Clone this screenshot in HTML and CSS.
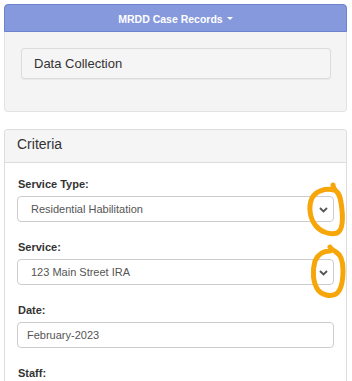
FILE: index.html
```html
<!DOCTYPE html>
<html>
<head>
<meta charset="utf-8">
<link rel="stylesheet" href="styles.css">
</head>
<body>
<div class="page">
  <div class="menu-btn">MRDD Case Records<span class="caret"></span></div>
  <div class="menu-panel">
    <div class="well">Data Collection</div>
  </div>

  <div class="panel">
    <div class="panel-heading">Criteria</div>
    <div class="panel-body">
      <div class="form-group">
        <div class="label">Service Type:</div>
        <div class="select">
          <span>Residential Habilitation</span>
          <svg class="chev" width="9" height="6" viewBox="0 0 9 6"><path d="M1 1 L4.5 4.5 L8 1" fill="none" stroke="#555" stroke-width="1.8"/></svg>
        </div>
      </div>
      <div class="form-group">
        <div class="label">Service:</div>
        <div class="select">
          <span>123 Main Street IRA</span>
          <svg class="chev" width="9" height="6" viewBox="0 0 9 6"><path d="M1 1 L4.5 4.5 L8 1" fill="none" stroke="#555" stroke-width="1.8"/></svg>
        </div>
      </div>
      <div class="form-group">
        <div class="label">Date:</div>
        <div class="input">February-2023</div>
      </div>
      <div class="form-group last">
        <div class="label">Staff:</div>
      </div>
    </div>
  </div>
</div>
<svg class="marks" width="352" height="381" viewBox="0 0 352 381">
  <path d="M334,190 C325,188 316,191 312,198 C308,207 310,219 316,226 C321,232 330,235 337,233 C343,230 343,220 342,210 C341,200 340,194 336,191 C334,189 333,187 333,185" fill="none" stroke="#f6a609" stroke-width="5" stroke-linecap="round" stroke-linejoin="round"/>
  <path d="M330,251 C324,251 318,254 315,261 C312,271 313,283 318,290 C322,295 330,297 336,294 C342,290 343,280 343,270 C343,261 341,255 336,252 C333,250 331,249 330,247" fill="none" stroke="#f6a609" stroke-width="5" stroke-linecap="round" stroke-linejoin="round"/>
</svg>
</body>
</html>
```

FILE: styles.css
```css
html, body {
  margin: 0;
  padding: 0;
  background: #ffffff;
  overflow: hidden;
}
body {
  font-family: "Liberation Sans", Arial, sans-serif;
  color: #333;
  position: relative;
  width: 352px;
  height: 381px;
}
.page {
  padding: 4px 5px 0 4px;
}
.menu-btn {
  height: 25px;
  background: #8599dc;
  border: 1px solid #6b82cf;
  border-radius: 4px 4px 0 0;
  color: #fff;
  font-weight: bold;
  font-size: 10.5px;
  display: flex;
  align-items: center;
  justify-content: center;
  padding-top: 1px;
  box-sizing: content-box;
}
.caret {
  display: inline-block;
  width: 0;
  height: 0;
  margin-left: 4px;
  border-top: 3px solid #fff;
  border-left: 3px solid transparent;
  border-right: 3px solid transparent;
}
.menu-panel {
  height: 63px;
  background: #f4f4f4;
  border: 1px solid #e3e3e3;
  border-top: none;
  border-radius: 0 0 4px 4px;
  padding: 16px 15px 0 16px;
}
.well {
  height: 29px;
  border: 1px solid #dcdcdc;
  border-radius: 3px;
  background: #f5f5f5;
  box-shadow: 0 1px 1px rgba(0,0,0,0.05);
  display: flex;
  align-items: center;
  padding-left: 12px;
  font-size: 13px;
  color: #333;
}
.panel {
  margin-top: 17px;
  border: 1px solid #dddddd;
  border-bottom: none;
  border-radius: 4px 4px 0 0;
  height: 252px;
  overflow: hidden;
}
.panel-heading {
  height: 33px;
  box-sizing: border-box;
  background: #f5f5f5;
  border-bottom: 1px solid #dddddd;
  border-radius: 3px 3px 0 0;
  padding: 4px 12px 0 12px;
  font-size: 14px;
  line-height: 20px;
  color: #333;
}
.panel-body {
  padding: 14px 12px 0 12px;
}
.form-group {
  margin-bottom: 18px;
}
.form-group.last {
  margin-bottom: 0;
}
.label {
  font-size: 11px;
  font-weight: bold;
  line-height: 15px;
  margin-bottom: 4px;
  padding-left: 1px;
  color: #333;
}
.select, .input {
  height: 24px;
  border: 1px solid #cccccc;
  border-radius: 4px;
  display: flex;
  align-items: center;
  font-size: 11px;
  color: #555;
  background: #fff;
}
.select {
  justify-content: space-between;
  padding: 0 5px 0 13px;
}
.input {
  padding: 0 9px;
}
.chev {
  display: block;
  margin-top: 1px;
}
.marks {
  position: absolute;
  left: 0;
  top: 0;
  pointer-events: none;
}
```
